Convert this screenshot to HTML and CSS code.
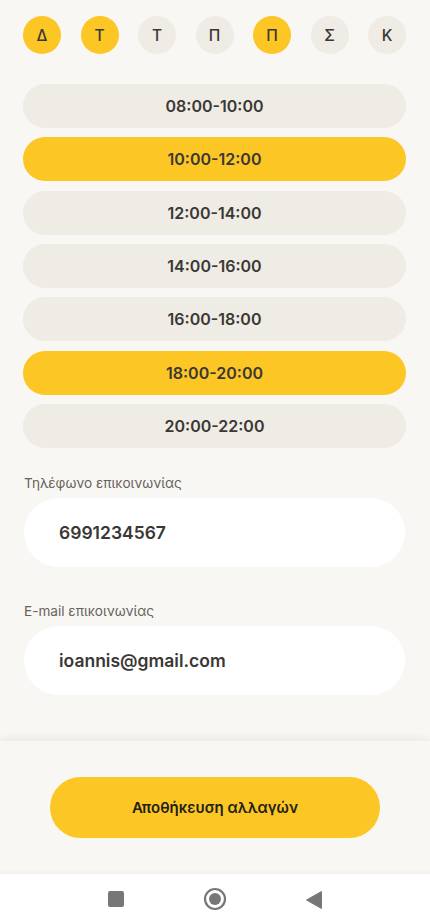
FILE: index.html
```html
<!DOCTYPE html>
<html lang="el">
<head>
<meta charset="utf-8">
<meta name="viewport" content="width=device-width, initial-scale=1">
<title>Διαθεσιμότητα</title>
<link rel="stylesheet" href="styles.css">
</head>
<body>
<div class="screen">
  <main class="content">
    <div class="days">
      <span class="day on">Δ</span>
      <span class="day on">Τ</span>
      <span class="day">Τ</span>
      <span class="day">Π</span>
      <span class="day on">Π</span>
      <span class="day">Σ</span>
      <span class="day">Κ</span>
    </div>
    <div class="slots">
      <div class="slot">08:00-10:00</div>
      <div class="slot on">10:00-12:00</div>
      <div class="slot">12:00-14:00</div>
      <div class="slot">14:00-16:00</div>
      <div class="slot">16:00-18:00</div>
      <div class="slot on">18:00-20:00</div>
      <div class="slot">20:00-22:00</div>
    </div>
    <div class="field">
      <label class="label">Τηλέφωνο επικοινωνίας</label>
      <div class="input">6991234567</div>
    </div>
    <div class="field second">
      <label class="label">E-mail επικοινωνίας</label>
      <div class="input">ioannis@gmail.com</div>
    </div>
  </main>
  <footer class="footer">
    <button class="save">Αποθήκευση αλλαγών</button>
  </footer>
  <nav class="sysnav">
    <span class="nav-square"></span>
    <svg class="nav-home" width="24" height="24" viewBox="0 0 24 24"><circle cx="12" cy="12" r="10" fill="none" stroke="#777" stroke-width="2.2"/><circle cx="12" cy="12" r="6" fill="#777"/></svg>
    <svg class="nav-back" width="16" height="18" viewBox="0 0 16 18"><path d="M15.5 0.5 V17.5 L0.5 9 Z" fill="#777" stroke="#777" stroke-linejoin="round"/></svg>
  </nav>
</div>
</body>
</html>
```
FILE: styles.css
```css
* { box-sizing: border-box; }
html, body { margin: 0; padding: 0; }
body {
  background: #f9f7f3;
  font-family: Inter, "Noto Sans", "DejaVu Sans", sans-serif;
  color: #3a3835;
}
.screen {
  width: 430px;
  height: 924px;
  display: flex;
  flex-direction: column;
  overflow: hidden;
}
.content {
  flex: 1;
  padding: 16px 24px 0 23px;
}
.days {
  display: flex;
  justify-content: space-between;
}
.day {
  width: 38px;
  height: 38px;
  border-radius: 50%;
  background: #efebe5;
  display: flex;
  align-items: center;
  justify-content: center;
  font-size: 15.5px;
  font-weight: 500;
  color: #3a3835;
}
.day.on { background: #fcc624; }
.slots {
  margin-top: 30px;
  display: flex;
  flex-direction: column;
  gap: 9.33px;
}
.slot {
  height: 44px;
  border-radius: 22px;
  background: #efebe5;
  display: flex;
  align-items: center;
  justify-content: center;
  font-size: 16px;
  font-weight: 600;
  color: #3a3835;
}
.slot.on { background: #fcc624; }
.field {
  margin-top: 25px;
  display: flex;
  flex-direction: column;
  gap: 5px;
}
.field.second { margin-top: 34px; }
.label {
  font-size: 13.6px;
  line-height: 20px;
  color: #66625d;
  padding-left: 1px;
}
.input {
  height: 69px;
  border-radius: 35px;
  background: #ffffff;
  display: flex;
  align-items: center;
  padding-left: 35px;
  font-size: 17.5px;
  font-weight: 600;
  color: #3a3835;
  margin-left: 1px;
  margin-right: 1px;
}
.footer {
  height: 133px;
  background: #f9f7f3;
  box-shadow: 0 -3px 8px rgba(0, 0, 0, 0.06);
  display: flex;
  align-items: center;
  justify-content: center;
  position: relative;
  z-index: 1;
}
.save {
  width: 330px;
  height: 61px;
  border: none;
  border-radius: 31px;
  background: #fcc624;
  font-family: inherit;
  font-size: 15px;
  font-weight: 600;
  color: #222018;
}
.sysnav {
  height: 50px;
  background: #ffffff;
  display: flex;
  align-items: center;
  justify-content: center;
  position: relative;
  z-index: 2;
  box-shadow: 0 -2px 4px rgba(0, 0, 0, 0.04);
}
.nav-square {
  width: 16px;
  height: 16px;
  border-radius: 2px;
  background: #777;
  margin-right: 79px;
}
.nav-home { margin-right: 79px; }
.nav-back { margin-top: 1px; }
```
